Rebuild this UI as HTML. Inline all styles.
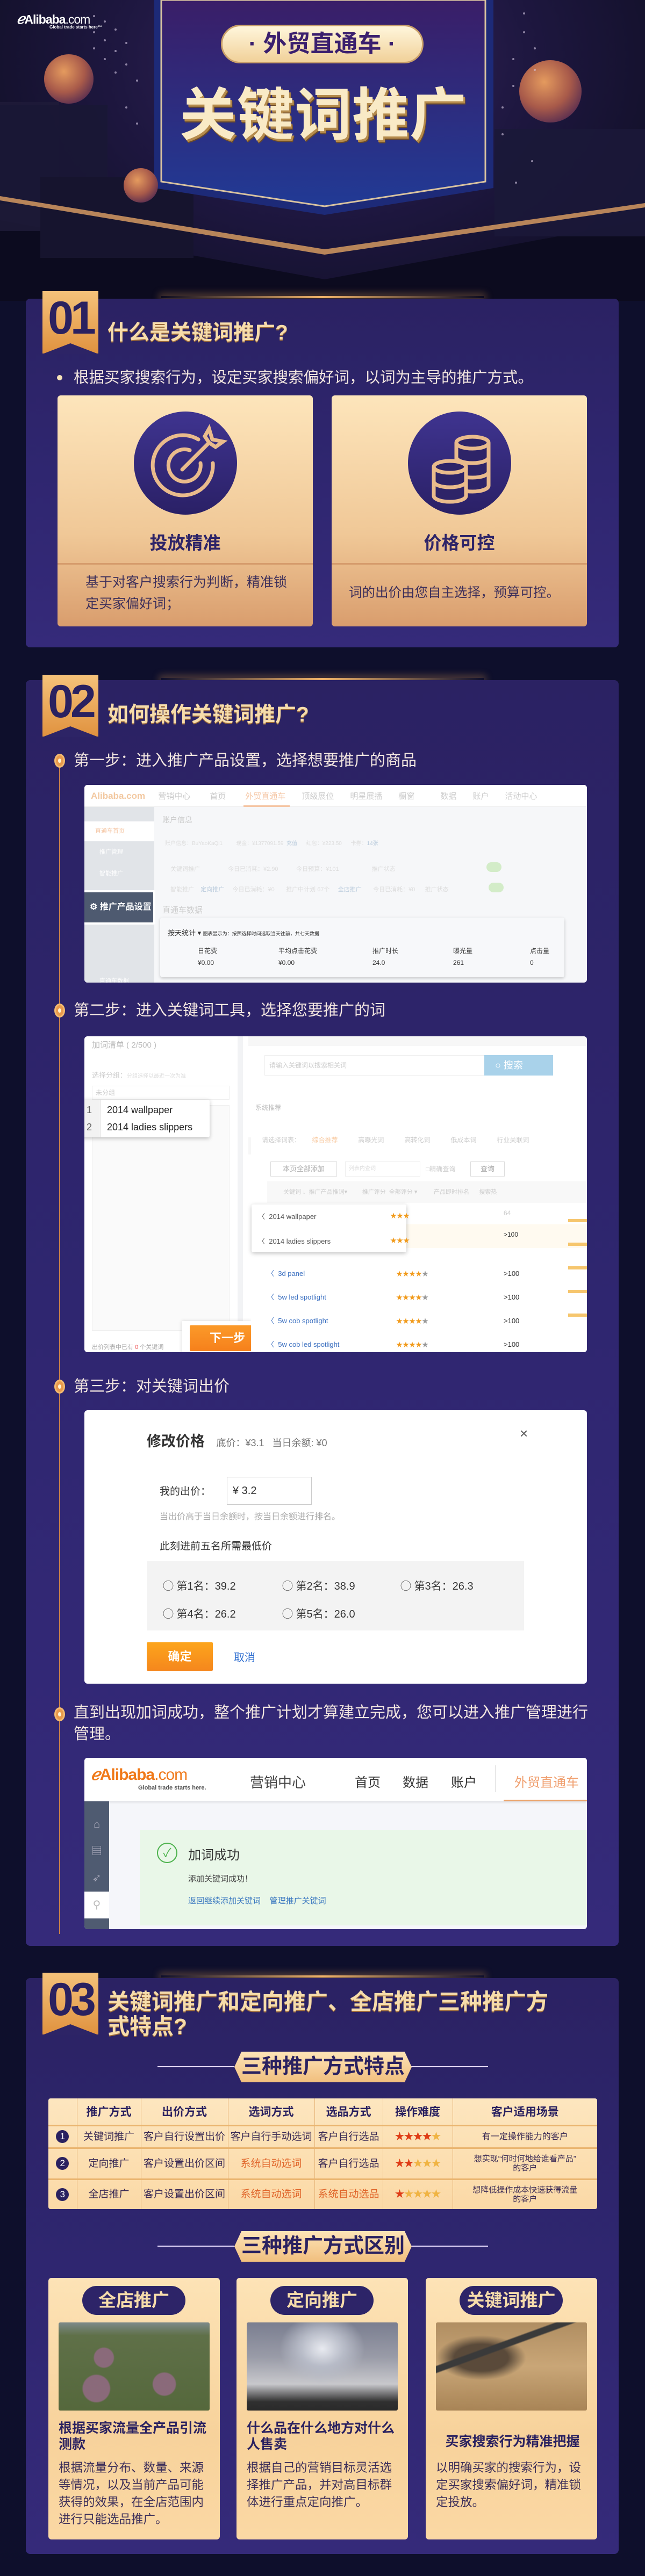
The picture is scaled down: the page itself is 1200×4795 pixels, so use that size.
<!DOCTYPE html>
<html><head><meta charset="utf-8">
<style>
*{margin:0;padding:0;box-sizing:border-box}
body{width:1200px;height:4795px;background:#0e0f2c;position:relative;overflow:hidden;font-family:"Liberation Sans","Noto Sans CJK SC",sans-serif;color:#222}
.a{position:absolute}
.sec{position:absolute;left:48px;width:1103px;border-radius:8px;background:linear-gradient(180deg,#2b2263 0%,#2f2670 50%,#352a7a 100%)}
.glow{position:absolute;left:300px;width:600px;height:4px;background:linear-gradient(90deg,rgba(240,170,90,0),#f0b36a 50%,rgba(240,170,90,0));box-shadow:0 0 14px 4px rgba(240,170,90,.35)}
.badge{position:absolute;left:79px;width:104px;background:linear-gradient(180deg,#f5c27a,#e0923f);color:#2a2160;font-weight:bold;font-size:86px;line-height:100px;text-align:center;letter-spacing:-6px;font-family:"Liberation Sans Narrow","Liberation Sans",sans-serif}
.badge:after{content:"";position:absolute;left:0;bottom:-1px;border-left:52px solid transparent;border-right:52px solid transparent;border-bottom:20px solid #2d2466}
.h2{position:absolute;left:200px;color:#f6dcab;font-weight:bold;font-size:39px;line-height:46px;text-shadow:0 2px 0 #9b6a3a}
.step{position:absolute;left:137px;color:#f3e6e0;font-size:29px;line-height:44px}
.dot{position:absolute;left:101px;width:20px;height:26px;border-radius:50%;background:#e99a4c;border:3px solid #f2b970}
.dot:after{content:"";position:absolute;left:4px;top:6px;width:6px;height:8px;border-radius:50%;background:#fff3d6}
.shot{position:absolute;left:157px;width:935px;background:#fff;border-radius:6px;overflow:hidden}
.card{position:absolute;top:736px;width:475px;height:430px;border-radius:6px;background:linear-gradient(180deg,#fde5bb,#f0c897 60%,#d99d6d)}
.ctitle{position:absolute;top:248px;width:100%;text-align:center;font-size:33px;font-weight:bold;color:#2e2468}
.cdesc{position:absolute;top:328px;left:52px;right:30px;font-size:25px;line-height:40px;color:#3d2f5a}
.circ{position:absolute;left:142px;top:30px;width:192px;height:192px;border-radius:50%;background:linear-gradient(180deg,#3f3490,#2a2066)}
.sub{position:absolute;left:436px;width:330px;height:57px;color:#2a2160;font-weight:bold;font-size:38px;line-height:57px;text-align:center;background:linear-gradient(180deg,#fde4b8,#f1bf7e);clip-path:polygon(4% 0,96% 0,100% 50%,96% 100%,4% 100%,0 50%)}
.subl{position:absolute;height:2px;background:#e8dcff;width:143px}
table{border-collapse:collapse}
.tb td{border-right:1px solid #e6b57a;border-bottom:3px solid #eab570;text-align:center;font-size:18px;color:#3a2a55;line-height:21px}
.tb td:last-child{border-right:none}
.tb tr:last-child td{border-bottom:none}
.tb th{font-size:21px;font-weight:bold;color:#2a2160;border-right:1px solid #e6b57a;border-bottom:3px solid #eab570;height:50px}
.num{display:inline-block;width:24px;height:24px;border-radius:50%;background:#2a2160;color:#fff;font-size:17px;line-height:24px}
.tb td.or{color:#e0662b}
.st{font-size:19px;letter-spacing:-1px}
.st b{color:#df3c16;font-weight:normal}.st i{color:#f0b443;font-style:normal}
.k{position:absolute;top:4240px;width:319px;height:487px;border-radius:6px;background:linear-gradient(180deg,#fde3b6,#f7d29b 60%,#fbd8a4)}
.pill{position:absolute;left:63px;top:15px;width:192px;height:54px;border-radius:27px;background:#2d2468;color:#f6dcab;font-size:33px;font-weight:bold;text-align:center;line-height:54px}
.img{position:absolute;left:19px;top:83px;width:281px;height:164px;border-radius:3px}
.kt{position:absolute;left:19px;top:265px;width:285px;font-size:25px;font-weight:bold;color:#2a2160;line-height:30px}
.kd{position:absolute;left:19px;top:338px;width:285px;font-size:22.5px;color:#3d2f5a;line-height:32px}
.g{color:#999}
</style></head><body>

<!-- HERO -->
<div class="a" style="left:0;top:0;width:1200px;height:560px;background:radial-gradient(ellipse at 50% 20%,#3a2760 0%,#1e1740 45%,#121029 80%)"></div>
<svg class="a" style="left:0;top:0" width="1200" height="560">
 <defs>
  <linearGradient id="bn" x1="0" y1="0" x2="0" y2="1"><stop offset="0" stop-color="#3a1e68"/><stop offset="1" stop-color="#213a95"/></linearGradient>
  <radialGradient id="sp" cx="0.4" cy="0.35" r="0.7"><stop offset="0" stop-color="#e49a5e"/><stop offset=".6" stop-color="#a85a4a"/><stop offset="1" stop-color="#5a2e50"/></radialGradient>
 </defs>
 <polygon points="0,410 0,560 1200,560 1200,410 604,520" fill="#0c0b1f"/>
 <polygon points="0,190 110,190 110,430 0,430" fill="#1f1b3a" opacity=".8"/>
 <polygon points="0,195 200,195 200,380 0,380" fill="#1a1735" opacity=".9"/>
 <polygon points="75,330 360,330 360,480 75,480" fill="#16142e"/>
 <polygon points="920,240 1200,240 1200,440 920,440" fill="#1b1838" opacity=".9"/>
 <polygon points="0,365 604,464 1200,378 1200,386 604,474 0,373" fill="#b8855a"/>
 <polygon points="287,0 918,0 918,350 604,400 287,350" fill="#1d2a78"/>
 <polygon points="300,0 903,0 903,338 604,384 300,338" fill="url(#bn)" stroke="#d9c3a0" stroke-width="3"/>
 <circle cx="128" cy="147" r="46" fill="url(#sp)"/>
 <circle cx="1024" cy="170" r="58" fill="url(#sp)"/>
 <circle cx="262" cy="345" r="32" fill="url(#sp)"/>
 <g fill="#d8cbe6" opacity=".6">
  <circle cx="175" cy="30" r="2"/><circle cx="175" cy="60" r="2"/><circle cx="175" cy="90" r="2"/><circle cx="195" cy="40" r="2"/><circle cx="195" cy="75" r="2"/><circle cx="195" cy="110" r="2"/><circle cx="215" cy="55" r="2"/><circle cx="215" cy="95" r="2"/><circle cx="215" cy="135" r="2"/><circle cx="235" cy="80" r="2"/><circle cx="235" cy="120" r="2"/><circle cx="235" cy="200" r="2"/><circle cx="255" cy="150" r="2"/><circle cx="255" cy="230" r="2"/>
  <circle cx="975" cy="25" r="2"/><circle cx="975" cy="60" r="2"/><circle cx="995" cy="90" r="2"/><circle cx="995" cy="130" r="2"/><circle cx="955" cy="110" r="2"/><circle cx="955" cy="160" r="2"/><circle cx="935" cy="200" r="2"/><circle cx="935" cy="250" r="2"/><circle cx="990" cy="300" r="2"/><circle cx="960" cy="340" r="2"/>
 </g>
</svg>
<div class="a" style="left:31px;top:20px;color:#fff;font-size:23px;font-weight:bold;letter-spacing:-1px"><span style="font-style:italic;font-size:26px">ℯ</span>Alibaba<span style="font-weight:normal">.com</span></div>
<div class="a" style="left:92px;top:46px;color:#fff;font-size:8px;font-weight:bold">Global trade starts here™</div>
<div class="a" style="left:411px;top:46px;width:377px;height:72px;border-radius:36px;background:linear-gradient(180deg,#fff6dc,#f1d19a);border:3px solid #caa06a;color:#3b1f6e;font-weight:bold;font-size:44px;line-height:66px;text-align:center">· 外贸直通车 ·</div>
<div class="a" style="left:300px;top:150px;width:603px;text-align:center;font-size:106px;font-weight:bold;color:#f9eac6;line-height:130px;letter-spacing:1px;text-shadow:3px 4px 0 #b58b4c,4px 6px 0 #6a4a2a">关键词推广</div>

<!-- SECTION 1 -->
<div class="glow" style="top:551px"></div>
<div class="sec" style="top:556px;height:649px"></div>
<div class="badge" style="top:542px;height:116px">01</div>
<div class="h2" style="top:597px">什么是关键词推广?</div>
<div class="a" style="left:106px;top:698px;width:10px;height:10px;border-radius:50%;background:#f6e2b8"></div>
<div class="a" style="left:137px;top:682px;color:#f3e6e0;font-size:28.5px;line-height:42px">根据买家搜索行为，设定买家搜索偏好词，以词为主导的推广方式。</div>
<div class="card" style="left:107px">
 <div class="circ"><svg width="192" height="192"><g fill="none" stroke="#e9bb8c" stroke-width="7" stroke-linecap="round"><path d="M120 52 A56 56 0 1 0 147 96"/><path d="M104 72 A30 30 0 1 0 124 96"/><path d="M90 108 L140 58"/><path d="M132 46 L140 32 L146 52 L166 56 L152 66 L140 58 Z"/></g></svg></div>
 <div class="ctitle">投放精准</div>
 <div class="a" style="left:0;top:312px;width:100%;height:3px;background:#d59b6c"></div>
 <div class="cdesc" style="left:52px">基于对客户搜索行为判断，精准锁定买家偏好词；</div>
</div>
<div class="card" style="left:617px">
 <div class="circ"><svg width="192" height="192"><g fill="#2e2468" stroke="#e9bb8c" stroke-width="7"><path d="M90 58 v80 a30 11 0 0 0 60 0 v-80"/><ellipse cx="120" cy="58" rx="30" ry="11"/><path d="M90 85 a30 11 0 0 0 60 0 M90 112 a30 11 0 0 0 60 0" fill="none"/><path d="M48 103 v54 a30 11 0 0 0 60 0 v-54"/><ellipse cx="78" cy="103" rx="30" ry="11"/><path d="M48 130 a30 11 0 0 0 60 0" fill="none"/></g></svg></div>
 <div class="ctitle">价格可控</div>
 <div class="a" style="left:0;top:312px;width:100%;height:3px;background:#d59b6c"></div>
 <div class="cdesc" style="left:32px;top:348px;font-size:24.5px">词的出价由您自主选择，预算可控。</div>
</div>

<!-- SECTION 2 -->
<div class="glow" style="top:1262px"></div>
<div class="sec" style="top:1266px;height:2356px"></div>
<div class="badge" style="top:1256px;height:115px">02</div>
<div class="h2" style="top:1308px">如何操作关键词推广?</div>
<div class="a" style="left:110px;top:1420px;width:2px;height:2180px;background:#c8804a"></div>
<div class="dot" style="top:1403px"></div>
<div class="step" style="top:1394px">第一步：进入推广产品设置，选择想要推广的商品</div>

<div class="shot" style="top:1461px;height:368px;background:#f6f7f9">
 <div class="a" style="left:0;top:0;width:935px;height:41px;background:#fff;border-bottom:1px solid #eee;color:#ccc;font-size:15px;line-height:41px;white-space:nowrap">
  <span style="margin-left:12px;color:#f2c8a0;font-weight:bold;font-size:17px">Alibaba.com</span>
  <span style="margin-left:20px">营销中心</span><span style="margin-left:36px">首页</span><span style="margin-left:36px;color:#f5c6a4">外贸直通车</span><span style="margin-left:30px">顶级展位</span><span style="margin-left:30px">明星展播</span><span style="margin-left:30px">橱窗</span><span style="margin-left:48px">数据</span><span style="margin-left:30px">账户</span><span style="margin-left:30px">活动中心</span>
  <div class="a" style="left:296px;top:38px;width:86px;height:3px;background:#f5c6a4"></div>
 </div>
 <div class="a" style="left:0;top:41px;width:130px;height:327px;background:#e1e4e8;color:#fff;font-size:11px">
  <div style="margin-top:27px;height:37px;background:#fff;color:#f5c6a4;line-height:37px;padding-left:20px">直通车首页</div>
  <div style="line-height:40px;padding-left:28px">推广管理</div><div style="line-height:40px;padding-left:28px">智能推广</div><div style="line-height:40px;padding-left:28px">推广工具</div>
  <div style="margin-top:120px;line-height:40px;padding-left:28px">直通车数据</div><div style="line-height:40px;padding-left:28px">直通车账户</div><div style="line-height:40px;padding-left:28px">第三方服务工具</div>
 </div>
 <div class="a" style="left:145px;top:55px;color:#ccc;font-size:14px">账户信息</div>
 <div class="a" style="left:150px;top:100px;color:#ddd;font-size:10px;white-space:nowrap">账户信息：BuYaoKaQi1 &nbsp;&nbsp;&nbsp;&nbsp;&nbsp;&nbsp;&nbsp; 现金：¥1377091.59 &nbsp;<span style="color:#bcd">充值</span> &nbsp;&nbsp;&nbsp;&nbsp; 红包：¥223.50 &nbsp;&nbsp;&nbsp;&nbsp; 卡券：<span style="color:#bcd">14张</span></div>
 <div class="a" style="left:160px;top:148px;color:#ddd;font-size:11px;white-space:nowrap">关键词推广 &nbsp;&nbsp;&nbsp;&nbsp;&nbsp;&nbsp;&nbsp;&nbsp;&nbsp;&nbsp;&nbsp;&nbsp;&nbsp;&nbsp;&nbsp; 今日已消耗：¥2.90 &nbsp;&nbsp;&nbsp;&nbsp;&nbsp;&nbsp;&nbsp;&nbsp;&nbsp; 今日预算：¥101 &nbsp;&nbsp;&nbsp;&nbsp;&nbsp;&nbsp;&nbsp;&nbsp;&nbsp;&nbsp;&nbsp;&nbsp;&nbsp;&nbsp;&nbsp;&nbsp;&nbsp;&nbsp; 推广状态</div>
 <div class="a" style="left:748px;top:144px;width:28px;height:18px;border-radius:9px;background:#d3ecc8"></div>
 <div class="a" style="left:160px;top:186px;color:#ddd;font-size:11px;white-space:nowrap">智能推广 &nbsp;&nbsp; <span style="color:#bcd">定向推广</span> &nbsp;&nbsp;&nbsp; 今日已消耗：¥0 &nbsp;&nbsp;&nbsp;&nbsp;&nbsp; 推广中计划 67个 &nbsp;&nbsp;&nbsp; <span style="color:#bcd">全店推广</span> &nbsp;&nbsp;&nbsp;&nbsp;&nbsp; 今日已消耗：¥0 &nbsp;&nbsp;&nbsp;&nbsp; 推广状态</div>
 <div class="a" style="left:752px;top:182px;width:28px;height:18px;border-radius:9px;background:#d3ecc8"></div>
 <div class="a" style="left:145px;top:222px;color:#ccc;font-size:15px">直通车数据</div>
 <div class="a" style="left:141px;top:247px;width:752px;height:111px;background:#f7f8fa;border-radius:4px;box-shadow:0 2px 6px rgba(0,0,0,.2)">
  <div class="a" style="left:14px;top:18px;font-size:13px;color:#333;white-space:nowrap">按天统计 ▾ <span style="font-size:9px">图表显示为：按照选择时间选取当天往前，共七天数据</span></div>
  <div class="a" style="left:70px;top:51px;font-size:12px;color:#333;line-height:22px">日花费<br>¥0.00</div>
  <div class="a" style="left:220px;top:51px;font-size:12px;color:#333;line-height:22px">平均点击花费<br>¥0.00</div>
  <div class="a" style="left:395px;top:51px;font-size:12px;color:#333;line-height:22px">推广时长<br>24.0</div>
  <div class="a" style="left:545px;top:51px;font-size:12px;color:#333;line-height:22px">曝光量<br>261</div>
  <div class="a" style="left:688px;top:51px;font-size:12px;color:#333;line-height:22px">点击量<br>0</div>
 </div>
 <div class="a" style="left:-4px;top:196px;width:136px;height:64px;background:#4e5a70;border:4px solid #fff;border-radius:3px;color:#fff;font-size:16px;font-weight:bold;line-height:56px;padding-left:10px;white-space:nowrap">⚙ 推广产品设置</div>
</div>

<div class="dot" style="top:1868px"></div>
<div class="step" style="top:1859px">第二步：进入关键词工具，选择您要推广的词</div>
<div class="shot" style="top:1929px;height:588px;background:#fff">
 <div class="a" style="left:0;top:0;width:295px;height:588px;background:#fff;border-right:10px solid #f2f3f5"></div>
 <div class="a" style="left:14px;top:5px;font-size:15px;color:#bbb">加词清单 ( 2/500 )</div>
 <div class="a" style="left:14px;top:62px;font-size:13px;color:#ccc">选择分组：<span style="font-size:10px;color:#ddd">分组选择以最近一次为准</span></div>
 <div class="a" style="left:14px;top:92px;width:256px;height:26px;border:1px solid #eee;font-size:12px;color:#ccc;line-height:24px;padding-left:6px">未分组</div>
 <div class="a" style="left:14px;top:128px;width:256px;height:420px;border:1px solid #eee;background:#fafafa"></div>
 <div class="a" style="left:-6px;top:118px;width:239px;height:70px;background:#fff;box-shadow:0 2px 8px rgba(0,0,0,.25);border-radius:3px;font-size:18px;color:#222;line-height:32px">
  <div style="position:absolute;left:0;top:0;width:36px;height:70px;background:#f2f2f2;border-right:1px solid #ddd"></div>
  <div class="a" style="left:10px;top:3px;color:#666">1<br>2</div>
  <div class="a" style="left:48px;top:3px;white-space:nowrap">2014 wallpaper<br>2014 ladies slippers</div>
 </div>
 <div class="a" style="left:14px;top:570px;font-size:11px;color:#aaa">出价列表中已有 <span style="color:#e55">0</span> 个关键词</div>
 <div class="a" style="left:181px;top:530px;width:130px;height:60px;background:#fff;box-shadow:0 0 6px rgba(0,0,0,.15)"></div>
 <div class="a" style="left:196px;top:538px;width:140px;height:48px;background:linear-gradient(180deg,#fb9a2a,#f6801b);color:#fff;font-size:22px;font-weight:bold;text-align:center;line-height:48px;border-radius:2px">下一步</div>
 <div class="a" style="left:305px;top:0;width:630px;height:220px;background:#f7f7f7"></div>
 <div class="a" style="left:305px;top:18px;width:630px;height:170px;background:#fff"></div>
 <div class="a" style="left:335px;top:35px;width:410px;height:38px;border:1px solid #eee;font-size:12px;color:#ccc;line-height:36px;padding-left:8px">请输入关键词以搜索相关词</div>
 <div class="a" style="left:744px;top:35px;width:128px;height:38px;background:#a9d2ea;color:#fff;font-size:18px;line-height:38px;padding-left:20px">○ 搜索</div>
 <div class="a" style="left:310px;top:118px;width:82px;height:30px;background:#fff;font-size:12px;color:#bbb;line-height:30px;padding-left:8px">系统推荐</div>
 <div class="a" style="left:310px;top:148px;width:625px;height:440px;background:#fff"></div>
 <div class="a" style="left:330px;top:184px;font-size:12px;color:#ccc;white-space:nowrap">请选择词表： <span style="color:#f8c9a0;margin-left:18px">综合推荐</span><span style="margin-left:38px">高曝光词</span><span style="margin-left:38px">高转化词</span><span style="margin-left:38px">低成本词</span><span style="margin-left:38px">行业关联词</span></div>
 <div class="a" style="left:346px;top:233px;width:124px;height:28px;border:1px solid #ddd;font-size:13px;color:#aaa;text-align:center;line-height:26px">本页全部添加</div>
 <div class="a" style="left:485px;top:233px;width:140px;height:28px;border:1px solid #eee;font-size:10px;color:#ddd;line-height:26px;padding-left:6px">列表内查词</div>
 <div class="a" style="left:635px;top:238px;font-size:12px;color:#ccc">□精确查询</div>
 <div class="a" style="left:718px;top:233px;width:64px;height:28px;border:1px solid #ddd;font-size:13px;color:#aaa;text-align:center;line-height:26px">查询</div>
 <div class="a" style="left:340px;top:270px;width:595px;height:40px;background:#f8f8f8;font-size:11px;color:#ccc;line-height:40px;white-space:nowrap;padding-left:30px">关键词 ↓ &nbsp;推广产品推词▾ &nbsp;&nbsp;&nbsp;&nbsp;&nbsp;&nbsp;&nbsp; 推广评分 &nbsp;全部评分 ▾ &nbsp;&nbsp;&nbsp;&nbsp;&nbsp;&nbsp;&nbsp;&nbsp; 产品即时排名 &nbsp;&nbsp;&nbsp;&nbsp; 搜索热</div>
 <div class="a" style="left:340px;top:350px;width:595px;height:44px;background:#fffaf0"></div>
 <div class="a" style="left:780px;top:322px;font-size:12px;color:#ccc">64</div>
 <div class="a" style="left:780px;top:362px;font-size:12px;color:#333">&gt;100</div>
 <div class="a" style="left:311px;top:313px;width:288px;height:89px;background:#fff;box-shadow:0 2px 8px rgba(0,0,0,.25);border-radius:3px;font-size:13px;color:#555">
  <div class="a" style="left:12px;top:12px;white-space:nowrap">〈 &nbsp;2014 wallpaper</div><div class="a" style="left:12px;top:58px;white-space:nowrap">〈 &nbsp;2014 ladies slippers</div>
  <div class="a" style="left:0;top:45px;width:288px;height:44px;background:#fffaf0;z-index:-1"></div>
  <div class="a" style="left:258px;top:12px;color:#f19a1a;font-size:12px">★★★</div><div class="a" style="left:258px;top:58px;color:#f19a1a;font-size:12px">★★★</div>
 </div>
 <div class="a" style="left:340px;top:420px;width:595px;font-size:13px;line-height:44px;color:#3a6fc0;white-space:nowrap">
  <div>〈 &nbsp;3d panel</div><div>〈 &nbsp;5w led spotlight</div><div>〈 &nbsp;5w cob spotlight</div><div>〈 &nbsp;5w cob led spotlight</div>
 </div>
 <div class="a" style="left:580px;top:420px;font-size:12px;line-height:44px;color:#f19a1a">★★★★<span class="g">★</span><br>★★★★<span class="g">★</span><br>★★★★<span class="g">★</span><br>★★★★<span class="g">★</span></div>
 <div class="a" style="left:780px;top:420px;font-size:13px;line-height:44px;color:#333">&gt;100<br>&gt;100<br>&gt;100<br>&gt;100</div>
 <div class="a" style="left:900px;top:322px;width:35px;height:200px;background:repeating-linear-gradient(180deg,transparent 0,transparent 18px,#f6c66e 18px,#f6c66e 24px,transparent 24px,transparent 44px)"></div>
</div>

<div class="dot" style="top:2568px"></div>
<div class="step" style="top:2559px">第三步：对关键词出价</div>
<div class="shot" style="top:2625px;height:509px">
 <div class="a" style="left:116px;top:36px;font-size:27px;font-weight:bold;color:#333;white-space:nowrap">修改价格 <span style="font-size:18px;font-weight:normal;color:#777;margin-left:14px">底价：¥3.1 &nbsp;&nbsp;当日余额: ¥0</span></div>
 <div class="a" style="left:810px;top:28px;font-size:26px;color:#555">×</div>
 <div class="a" style="left:140px;top:136px;font-size:19px;color:#333">我的出价：</div>
 <div class="a" style="left:265px;top:124px;width:158px;height:52px;border:1px solid #ccc;font-size:20px;color:#333;line-height:50px;padding-left:10px">¥ 3.2</div>
 <div class="a" style="left:140px;top:184px;font-size:16px;color:#aaa">当出价高于当日余额时，按当日余额进行排名。</div>
 <div class="a" style="left:140px;top:238px;font-size:19px;color:#333">此刻进前五名所需最低价</div>
 <div class="a" style="left:116px;top:281px;width:702px;height:129px;background:#f3f3f3;font-size:20px;color:#333">
  <div class="a" style="left:30px;top:30px;white-space:nowrap">◯ 第1名：39.2</div><div class="a" style="left:252px;top:30px;white-space:nowrap">◯ 第2名：38.9</div><div class="a" style="left:472px;top:30px;white-space:nowrap">◯ 第3名：26.3</div>
  <div class="a" style="left:30px;top:82px;white-space:nowrap">◯ 第4名：26.2</div><div class="a" style="left:252px;top:82px;white-space:nowrap">◯ 第5名：26.0</div>
 </div>
 <div class="a" style="left:116px;top:432px;width:123px;height:53px;background:linear-gradient(180deg,#fda51c,#f5871d);color:#fff;font-size:22px;font-weight:bold;text-align:center;line-height:53px;border-radius:2px">确定</div>
 <div class="a" style="left:278px;top:444px;font-size:20px;color:#2f6fd1">取消</div>
</div>

<div class="dot" style="top:3178px"></div>
<div class="step" style="top:3168px;width:960px;line-height:40px">直到出现加词成功，整个推广计划才算建立完成，您可以进入推广管理进行管理。</div>
<div class="shot" style="top:3272px;height:319px;background:#f5f6fa">
 <div class="a" style="left:0;top:0;width:935px;height:81px;background:#fff;box-shadow:0 2px 4px rgba(0,0,0,.1);white-space:nowrap">
  <div class="a" style="left:12px;top:14px;color:#f07a1a;font-size:30px;font-weight:bold;letter-spacing:-1px"><span style="font-style:italic">ℯ</span>Alibaba<span style="font-weight:normal">.com</span></div>
  <div class="a" style="left:100px;top:50px;font-size:11px;color:#555;font-weight:bold">Global trade starts here.</div>
  <div class="a" style="left:308px;top:26px;font-size:26px;color:#444">营销中心</div>
  <div class="a" style="left:503px;top:26px;font-size:24px;color:#333">首页</div>
  <div class="a" style="left:592px;top:26px;font-size:24px;color:#333">数据</div>
  <div class="a" style="left:682px;top:26px;font-size:24px;color:#333">账户</div>
  <div class="a" style="left:764px;top:14px;width:1px;height:50px;background:#ddd"></div>
  <div class="a" style="left:800px;top:26px;font-size:24px;color:#f0a070">外贸直通车</div>
  <div class="a" style="left:780px;top:78px;width:155px;height:3px;background:#eba36a"></div>
 </div>
 <div class="a" style="left:0;top:81px;width:46px;height:238px;background:#4f5b71;color:#aab;font-size:20px;text-align:center;line-height:50px;padding-top:18px">⌂<br>▤<br>➶<div style="background:#fff;color:#bbb;height:50px">⚲</div></div>
 <div class="a" style="left:103px;top:134px;width:832px;height:178px;background:#e9f7e8">
  <div class="a" style="left:32px;top:24px;width:38px;height:38px;border-radius:50%;border:2px solid #4cb24c;color:#4cb24c;font-size:22px;text-align:center;line-height:34px">✓</div>
  <div class="a" style="left:90px;top:27px;font-size:24px;color:#333">加词成功</div>
  <div class="a" style="left:90px;top:80px;font-size:15px;color:#444">添加关键词成功！</div>
  <div class="a" style="left:90px;top:121px;font-size:15px;color:#3a78c0;white-space:nowrap">返回继续添加关键词 &nbsp;&nbsp;&nbsp;管理推广关键词</div>
 </div>
</div>

<!-- SECTION 3 -->
<div class="glow" style="top:3677px"></div>
<div class="sec" style="top:3682px;height:1072px"></div>
<div class="badge" style="top:3672px;height:115px">03</div>
<div class="h2" style="top:3703px;width:860px;font-size:41px;line-height:46px">关键词推广和定向推广、全店推广三种推广方式特点?</div>
<div class="subl" style="left:293px;top:3846px"></div><div class="subl" style="left:765px;top:3846px"></div>
<div class="sub" style="top:3819px">三种推广方式特点</div>
<table class="tb a" style="left:90px;top:3906px;width:1021px;height:206px;background:linear-gradient(180deg,#fde6bf,#fbd9a6);border-radius:4px">
 <tr><th style="width:53px"></th><th style="width:119px">推广方式</th><th style="width:162px">出价方式</th><th style="width:161px">选词方式</th><th style="width:127px">选品方式</th><th style="width:130px">操作难度</th><th style="border-right:none">客户适用场景</th></tr>
 <tr><td><span class="num">1</span></td><td style="font-size:19px">关键词推广</td><td style="font-size:19px">客户自行设置出价</td><td style="font-size:19px">客户自行手动选词</td><td style="font-size:19px">客户自行选品</td><td class="st"><b>★★★★</b><i>★</i></td><td style="font-size:16px">有一定操作能力的客户</td></tr>
 <tr><td><span class="num">2</span></td><td style="font-size:19px">定向推广</td><td style="font-size:19px">客户设置出价区间</td><td class="or" style="font-size:19px">系统自动选词</td><td style="font-size:19px">客户自行选品</td><td class="st"><b>★★</b><i>★★★</i></td><td style="font-size:15px;line-height:17px">想实现“何时何地给谁看产品”<br>的客户</td></tr>
 <tr><td><span class="num">3</span></td><td style="font-size:19px">全店推广</td><td style="font-size:19px">客户设置出价区间</td><td class="or" style="font-size:19px">系统自动选词</td><td class="or" style="font-size:19px">系统自动选品</td><td class="st"><b>★</b><i>★★★★</i></td><td style="font-size:15px;line-height:17px">想降低操作成本快速获得流量<br>的客户</td></tr>
</table>
<div class="subl" style="left:293px;top:4180px"></div><div class="subl" style="left:765px;top:4180px"></div>
<div class="sub" style="top:4153px">三种推广方式区别</div>

<div class="k" style="left:90px">
 <div class="pill">全店推广</div>
 <div class="img" style="background:radial-gradient(circle at 30% 40%,#8a6a7a 0,#8a6a7a 8%,transparent 9%),radial-gradient(circle at 70% 70%,#8a6a7a 0,#8a6a7a 9%,transparent 10%),radial-gradient(circle at 25% 75%,#8a6a7a 0,#8a6a7a 10%,transparent 11%),linear-gradient(180deg,#7d8a8a 0,#5f7048 15%,#55683c 100%)"></div>
 <div class="kt">根据买家流量全产品引流测款</div>
 <div class="kd">根据流量分布、数量、来源等情况，以及当前产品可能获得的效果，在全店范围内进行只能选品推广。</div>
</div>
<div class="k" style="left:440px">
 <div class="pill">定向推广</div>
 <div class="img" style="background:radial-gradient(ellipse at 50% 30%,#e8eaf0 0,#b8bcc8 20%,transparent 40%),linear-gradient(180deg,#7a7e90 0,#9a9ca8 40%,#c8c8cc 70%,#303030 90%,#2a2a2a 100%)"></div>
 <div class="kt">什么品在什么地方对什么人售卖</div>
 <div class="kd">根据自己的营销目标灵活选择推广产品，并对高目标群体进行重点定向推广。</div>
</div>
<div class="k" style="left:792px">
 <div class="pill">关键词推广</div>
 <div class="img" style="background:linear-gradient(160deg,transparent 30%,#3a3a3a 31%,#3a3a3a 35%,transparent 36%),radial-gradient(ellipse at 30% 40%,#5a4a3a 0,#5a4a3a 18%,transparent 30%),linear-gradient(180deg,#b08e62,#c9a677 50%,#a88456)"></div>
 <div class="kt" style="top:290px;text-align:center">买家搜索行为精准把握</div>
 <div class="kd">以明确买家的搜索行为，设定买家搜索偏好词，精准锁定投放。</div>
</div>
</body></html>
